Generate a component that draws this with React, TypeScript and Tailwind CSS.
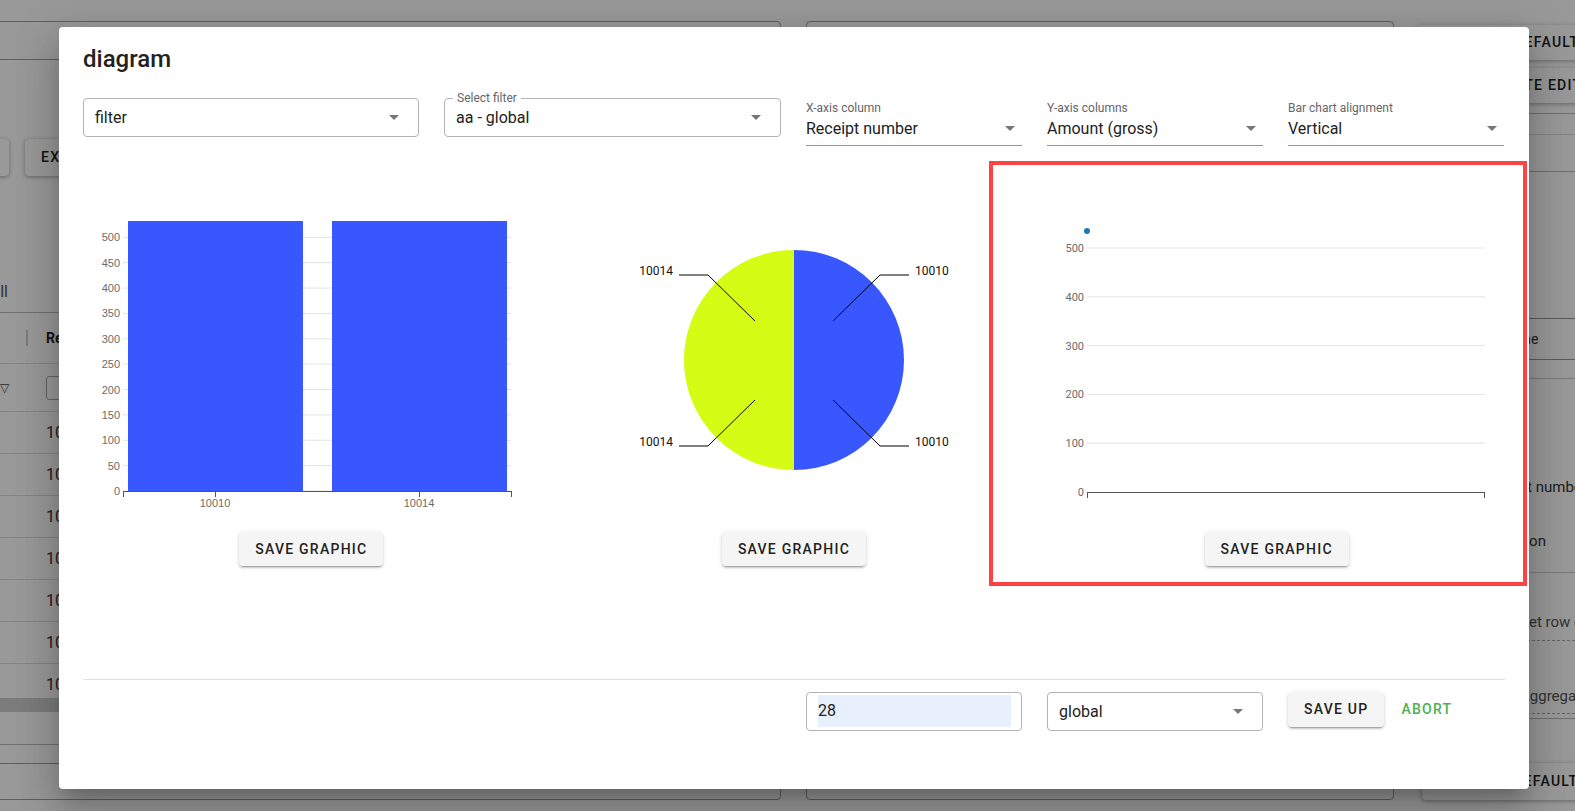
import React from "react";

const Arrow = ({ className = "" }: { className?: string }) => (
  <svg className={className} width="10" height="5" viewBox="0 0 10 5">
    <path d="M0 0h10L5 5z" fill="currentColor" />
  </svg>
);

const OutlinedSelect = ({ value, label }: { value: string; label?: string }) => (
  <div className="relative flex h-[39px] items-center rounded-[4px] border border-[#b3b3b3] pl-[11px]">
    {label && (
      <span className="absolute -top-[8px] left-[8px] bg-white px-[4px] text-[12px] leading-[14px] text-[#666]">
        {label}
      </span>
    )}
    <span className="text-[16px] text-[#222]">{value}</span>
    <Arrow className="absolute right-[19px] top-[16px] text-[#777]" />
  </div>
);

const StandardSelect = ({ label, value }: { label: string; value: string }) => (
  <div className="relative h-[48px] border-b border-[#949494]">
    <div className="pt-[3px] text-[12px] leading-[14px] text-[#666]">{label}</div>
    <div className="mt-[4px] text-[16px] leading-[19px] text-[#222]">{value}</div>
    <Arrow className="absolute right-[7px] top-[28px] text-[#777]" />
  </div>
);

const GrayButton = ({ children, className = "" }: { children: React.ReactNode; className?: string }) => (
  <button
    className={`h-[34px] rounded-[4px] bg-[#f5f5f5] px-[16px] text-[14px] font-medium uppercase tracking-[1.25px] text-[#222] shadow-[0_3px_1px_-2px_rgba(0,0,0,0.2),0_2px_2px_0_rgba(0,0,0,0.14),0_1px_5px_0_rgba(0,0,0,0.12)] ${className}`}
  >
    {children}
  </button>
);

const barTicks = [0, 50, 100, 150, 200, 250, 300, 350, 400, 450, 500];
const barY = (v: number) => 329 - v * 0.5074;

const BarChart = () => (
  <svg width="482" height="350" className="block">
    {barTicks.map((t) => (
      <g key={t}>
        <line x1="53" x2="441" y1={barY(t)} y2={barY(t)} stroke="#e3e3e3" />
        <text
          x="50"
          y={barY(t) + 4}
          textAnchor="end"
          fontSize="11"
          fill="#6b6b6b"
          fontFamily="'Liberation Sans', Arial, sans-serif"
        >
          {t}
        </text>
      </g>
    ))}
    <rect x="58" y="59" width="175" height="270" fill="#3957ff" />
    <rect x="262" y="59" width="175" height="270" fill="#3957ff" />
    <line x1="53" x2="441" y1="329.5" y2="329.5" stroke="#555" />
    {[53, 145, 349, 441].map((x) => (
      <line key={x} x1={x + 0.5} x2={x + 0.5} y1="329" y2="335" stroke="#555" />
    ))}
    {[
      [145, "10010"],
      [349, "10014"],
    ].map(([x, l]) => (
      <text
        key={l}
        x={x}
        y="345"
        textAnchor="middle"
        fontSize="11"
        fill="#6b6b6b"
        fontFamily="'Liberation Sans', Arial, sans-serif"
      >
        {l}
      </text>
    ))}
  </svg>
);

const PieChart = () => (
  <svg width="482" height="350" className="block">
    <path d="M241 88 A110 110 0 0 1 241 308 Z" fill="#3957ff" />
    <path d="M241 308 A110 110 0 0 1 241 88 Z" fill="#d4fc14" />
    <g stroke="#000" strokeWidth="1" fill="none">
      <polyline points="280,159 327,113 356,113" />
      <polyline points="280,238 327,284 356,284" />
      <polyline points="202,159 155,113 126,113" />
      <polyline points="202,238 155,284 126,284" />
    </g>
    <g fontSize="12" fill="#111" fontFamily="Roboto, sans-serif">
      <text x="362" y="113">10010</text>
      <text x="362" y="284">10010</text>
      <text x="120" y="113" textAnchor="end">10014</text>
      <text x="120" y="284" textAnchor="end">10014</text>
    </g>
  </svg>
);

const lineTicks = [0, 100, 200, 300, 400, 500];
const lineY = (v: number) => 330 - v * 0.488;

const LineChart = () => (
  <svg width="482" height="350" className="block">
    {lineTicks.map((t) => (
      <g key={t}>
        {t > 0 && <line x1="52" x2="450" y1={lineY(t)} y2={lineY(t)} stroke="#e3e3e3" />}
        <text x="49" y={lineY(t) + 4} textAnchor="end" fontSize="11" fill="#6b6b6b" fontFamily="Roboto, sans-serif">
          {t}
        </text>
      </g>
    ))}
    <line x1="52" x2="450" y1="330.5" y2="330.5" stroke="#555" />
    <line x1="52.5" x2="52.5" y1="330" y2="336" stroke="#555" />
    <line x1="449.5" x2="449.5" y1="330" y2="336" stroke="#555" />
    <circle cx="52" cy="69" r="3" fill="#1f77b4" />
  </svg>
);

const raised =
  "flex shrink-0 items-center whitespace-nowrap rounded-[4px] bg-white pr-[16px] text-[14px] font-medium tracking-[1.25px] text-[#222] shadow-[0_1px_4px_rgba(0,0,0,0.35)]";

const Background = () => (
  <div className="flex h-[811px] flex-col overflow-hidden bg-white">
    <div className="flex h-[763px]">
      <div className="w-[1417px] shrink-0">
        <div className="flex pt-[21px]">
          <div className="-ml-[20px] h-[39px] w-[801px] shrink-0 rounded-[4px] border border-[#9e9e9e]" />
          <div className="ml-[25px] h-[80px] w-[588px] shrink-0 rounded-[4px] border border-[#9e9e9e]" />
        </div>
        <div className="-mt-[2px] flex gap-[16px]">
          <div className="-ml-[91px] mt-[40px] h-[37px] w-[100px] rounded-[4px] bg-white shadow-[0_1px_4px_rgba(0,0,0,0.35)]" />
          <div className={`mt-[40px] h-[37px] pl-[16px] ${raised}`}>EXPORT</div>
        </div>
        <div className="-ml-[52px] mt-[106px] text-[16px] leading-[20px] text-[#555]">Show all</div>
        <div className="mt-[10px] border-t border-[#bbb]" />
        <div className="flex h-[51px] items-center border-b border-[#ddd]">
          <div className="h-[16px] w-[28px] border-r-2 border-[#ccc]" />
          <div className="pl-[18px] text-[14px] font-bold text-[#222]">Receipt number</div>
        </div>
        <div className="flex h-[48px] items-center border-b border-[#ddd]">
          <div className="w-[46px] text-[12px] text-[#444]">▽</div>
          <div className="h-[24px] w-[160px] rounded-[3px] border border-[#aaa]" />
        </div>
        <div className="h-[286px] overflow-hidden">
          {[0, 1, 2, 3, 4, 5, 6].map((i) => (
            <div key={i} className="flex h-[42px] items-center border-b border-[#ddd] pl-[46px] text-[16px] text-[#333]">
              {10010 + i}
            </div>
          ))}
        </div>
        <div className="h-[14px] bg-[#cfcfcf]" />
        <div className="mt-[32px] border-t border-[#bbb]" />
      </div>
      <div className="min-w-0 flex-1 whitespace-nowrap">
        <div className="flex flex-col gap-[8px] pt-[25px]">
          <div className={`h-[35px] w-[220px] pl-[64px] ${raised}`}>SET DEFAULT</div>
          <div className={`h-[35px] w-[220px] pl-[68px] ${raised}`}>CREATE EDIT</div>
        </div>
        <div className="mt-[10px] border-t border-[#bbb]" />
        <div className="mt-[20px] border-t border-[#ddd]" />
        <div className="mt-[36px] border-t border-[#bbb]" />
        <div className="mt-[146px] border-t border-[#999]" />
        <div className="flex h-[40px] items-center pl-[84px] text-[14px] text-[#333]">Name</div>
        <div className="border-t border-[#999]" />
        <div className="mt-[18px] border-t border-[#ccc]" />
        <div className="mt-[97px] pl-[65px] text-[15px] text-[#333]">Receipt number</div>
        <div className="mt-[31px] pl-[53px] text-[15px] text-[#333]">Description</div>
        <div className="mt-[20px] border-t border-[#ccc]" />
        <div className="mt-[38px] border-b border-dashed border-[#aaa] pb-[6px] pl-[87px] text-[15px] text-[#555]">
          Reset row grouping
        </div>
        <div className="mt-[44px] border-b border-dashed border-[#aaa] pb-[6px] pl-[103px] text-[15px] text-[#555]">
          Aggregate
        </div>
        <div className="mt-[4px] border-t border-[#bbb]" />
      </div>
    </div>
    <div className="flex h-[38px] items-start">
      <div className="-ml-[20px] h-[37px] w-[801px] shrink-0 rounded-[4px] border border-[#9e9e9e]" />
      <div className="ml-[25px] h-[37px] w-[588px] shrink-0 rounded-[4px] border border-[#9e9e9e]" />
      <div className={`ml-[28px] h-[37px] w-[220px] pl-[58px] ${raised}`}>SET DEFAULT</div>
    </div>
  </div>
);

export default function App() {
  return (
    <div className="relative h-[811px] w-full overflow-hidden font-['Roboto',sans-serif]">
      <Background />
      <div className="absolute inset-0 bg-black/40" />
      <div className="absolute inset-0 pl-[59px] pt-[27px]">
        <div className="relative flex h-[762px] w-[1470px] flex-col rounded-[4px] bg-white px-[24px] pt-[16px] shadow-[0_11px_15px_-7px_rgba(0,0,0,0.2),0_24px_38px_3px_rgba(0,0,0,0.14),0_9px_46px_8px_rgba(0,0,0,0.12)]">
          <h2 className="h-[32px] text-[24px] font-medium leading-[32px] text-[#222]">diagram</h2>

          <div className="mt-[23px] grid grid-cols-[336px_337px_216px_216px_216px] items-start gap-x-[25px]">
            <OutlinedSelect value="filter" />
            <OutlinedSelect value="aa - global" label="Select filter" />
            <StandardSelect label="X-axis column" value="Receipt number" />
            <StandardSelect label="Y-axis columns" value="Amount (gross)" />
            <StandardSelect label="Bar chart alignment" value="Vertical" />
          </div>

          <div className="-mx-[13px] mt-[16px] grid grid-cols-3">
            {[<BarChart key="b" />, <PieChart key="p" />, <LineChart key="l" />].map((chart, i) => (
              <div key={i} className="flex flex-col items-center">
                <div className="self-start">{chart}</div>
                <GrayButton className="mt-[20px]">Save graphic</GrayButton>
              </div>
            ))}
          </div>

          <div className="mt-[113px] h-px bg-[#e0e0e0]" />

          <div className="mt-[12px] grid grid-cols-[336px_337px_216px_216px_216px] items-start gap-x-[25px]">
            <div />
            <div />
            <div className="h-[39px] rounded-[4px] border border-[#b3b3b3] pb-[3px] pl-[11px] pr-[10px] pt-[2px]">
              <div className="flex h-full items-center bg-[#e8f0fe] text-[16px] text-[#222]">28</div>
            </div>
            <OutlinedSelect value="global" />
            <div className="flex items-center">
              <GrayButton className="h-[35px]">Save up</GrayButton>
              <button className="ml-[9px] px-[8px] text-[14px] font-medium uppercase tracking-[1.25px] text-[#4caf50]">
                Abort
              </button>
            </div>
          </div>

          <div className="pointer-events-none absolute left-[930px] top-[134px] h-[425px] w-[538px] border-[4px] border-[#fd4343]" />
        </div>
      </div>
    </div>
  );
}
